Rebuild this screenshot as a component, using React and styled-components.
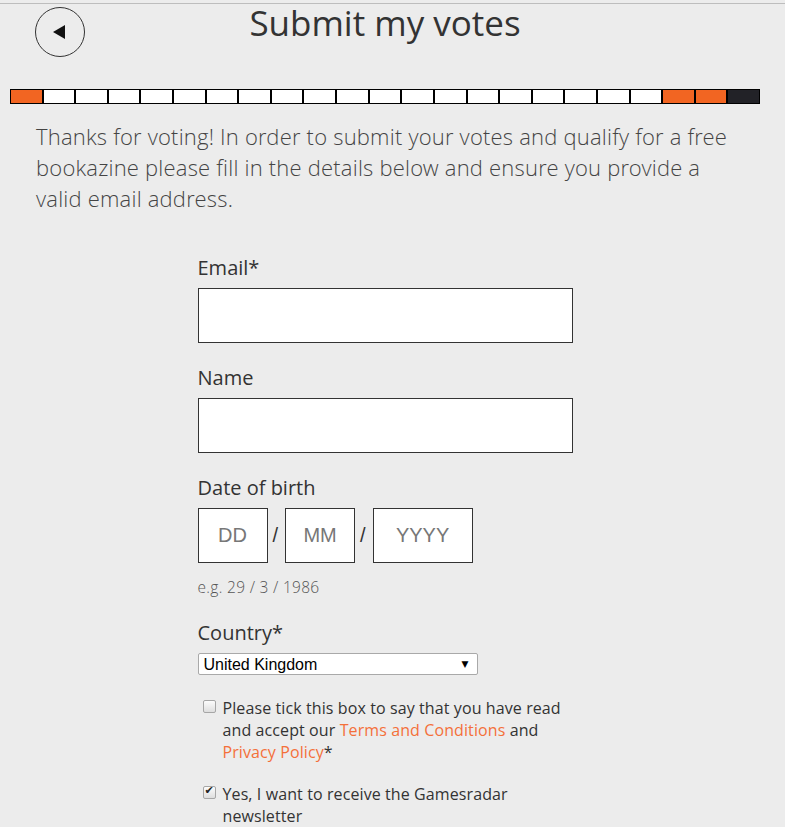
import styled, { createGlobalStyle } from "styled-components";

const GlobalStyle = createGlobalStyle`
  html, body {
    margin: 0;
    background: #ececec;
  }
  body {
    font-family: "Open Sans", "DejaVu Sans", sans-serif;
    color: #333;
  }
`;

// 23 steps: first done, then 19 open, two done, current one dark
const steps = [
  "done",
  ...Array(19).fill("open"),
  "done",
  "done",
  "current",
];

const stepColors = {
  done: "#f26522",
  open: "#ffffff",
  current: "#222227",
};

const App = () => {
  return (
    <Page>
      <GlobalStyle />
      <Wrapper>
        <Header>
          <BackButton type="button" aria-label="Back">
            <svg width="12" height="14" viewBox="0 0 12 14">
              <polygon points="0,7 12,0 12,14" fill="#111" />
            </svg>
          </BackButton>
          <Title>Submit my votes</Title>
          <span />
        </Header>

        <Progress>
          {steps.map((s, i) => (
            <Step key={i} $state={s} />
          ))}
        </Progress>

        <Intro>
          Thanks for voting! In order to submit your votes and qualify for a
          free bookazine please fill in the details below and ensure you
          provide a valid email address.
        </Intro>

        <Form>
          <Field>
            <Label>Email*</Label>
            <TextInput type="email" />
          </Field>
          <Field>
            <Label>Name</Label>
            <TextInput type="text" />
          </Field>
          <Field>
            <Label>Date of birth</Label>
            <DateRow>
              <DateBox $w={70} placeholder="DD" />
              <Slash>/</Slash>
              <DateBox $w={70} placeholder="MM" />
              <Slash>/</Slash>
              <DateBox $w={100} placeholder="YYYY" />
            </DateRow>
            <Hint>e.g. 29 / 3 / 1986</Hint>
          </Field>
          <Field>
            <Label>Country*</Label>
            <SelectWrap>
              <Select defaultValue="uk">
                <option value="uk">United Kingdom</option>
              </Select>
              <Arrow>▼</Arrow>
            </SelectWrap>
          </Field>

          <Checks>
            <CheckRow>
              <CheckBox type="checkbox" />
              <CheckText>
                Please tick this box to say that you have read and accept our{" "}
                <Link href="#">Terms and Conditions</Link> and{" "}
                <Link href="#">Privacy Policy</Link>*
              </CheckText>
            </CheckRow>
            <CheckRow>
              <CheckBox type="checkbox" defaultChecked />
              <CheckText>Yes, I want to receive the Gamesradar newsletter</CheckText>
            </CheckRow>
          </Checks>
        </Form>
      </Wrapper>
    </Page>
  );
};

const lightFont = `"Open Sans Light", "Open Sans", "DejaVu Sans", sans-serif`;

const Page = styled.div`
  margin-top: 3px;
  border-top: 1px solid #bdbdbd;
  min-height: 823px;
`;
const Wrapper = styled.div`
  width: 750px;
  margin-left: 10px;
`;
const Header = styled.div`
  display: grid;
  grid-template-columns: 1fr auto 1fr;
  align-items: start;
`;
const BackButton = styled.button`
  width: 50px;
  height: 50px;
  box-sizing: border-box;
  margin: 3px 0 0 25px;
  padding: 0;
  border: 1px solid #333;
  border-radius: 50%;
  background: transparent;
  display: flex;
  align-items: center;
  justify-content: center;
  cursor: pointer;
  svg {
    margin-left: -2px;
  }
`;
const Title = styled.h1`
  margin: 0;
  padding-top: 1px;
  font-size: 35px;
  font-weight: 400;
  line-height: 36px;
  color: #333;
  white-space: nowrap;
`;
const Progress = styled.div`
  display: flex;
  height: 15px;
  margin-top: 32px;
  box-sizing: border-box;
  border: 1px solid #000;
`;
const Step = styled.div`
  flex: 1;
  background: ${(p) => stepColors[p.$state]};
  & + & {
    border-left: 2px solid #000;
  }
`;
const Intro = styled.p`
  margin: 17px 0 0;
  padding: 0 26px;
  font-family: ${lightFont};
  font-size: 22px;
  font-weight: 300;
  line-height: 31px;
  letter-spacing: 0.2px;
  color: #444;
`;
const Form = styled.form`
  width: 375px;
  margin: 39px auto 0;
`;
const Field = styled.div`
  margin-bottom: 20px;
`;
const Label = styled.label`
  display: block;
  font-size: 20px;
  line-height: 28px;
  margin-bottom: 7px;
  padding-top: 1px;
  color: #333;
`;
const TextInput = styled.input`
  display: block;
  width: 375px;
  height: 55px;
  box-sizing: border-box;
  margin: -1px 0 0;
  border: 1px solid #333;
  background: #fff;
  outline: none;
`;
const DateRow = styled.div`
  display: flex;
  align-items: center;
  gap: 5px;
  margin-top: -1px;
`;
const DateBox = styled.input`
  width: ${(p) => p.$w}px;
  height: 55px;
  box-sizing: border-box;
  margin: 0;
  border: 1px solid #333;
  background: #fff;
  text-align: center;
  font-family: "Liberation Sans", Arial, sans-serif;
  font-size: 20px;
  outline: none;
  &::placeholder {
    color: #777;
  }
`;
const Slash = styled.span`
  font-family: "Liberation Sans", Arial, sans-serif;
  font-size: 20px;
  color: #333;
  margin-right: 2px;
`;
const Hint = styled.div`
  margin-top: 13px;
  font-family: ${lightFont};
  font-size: 15.5px;
  font-weight: 300;
  line-height: 22px;
  letter-spacing: 0.3px;
  color: #555;
`;
const SelectWrap = styled.div`
  position: relative;
  width: 280px;
  margin-top: -1px;
`;
const Select = styled.select`
  display: block;
  width: 280px;
  height: 22px;
  box-sizing: border-box;
  margin: 0;
  padding: 0 0 0 5px;
  border: 1px solid #a9a9a9;
  border-radius: 2px;
  background: #fff;
  appearance: none;
  font-family: "Liberation Sans", Arial, sans-serif;
  font-size: 16px;
  color: #000;
`;
const Arrow = styled.span`
  position: absolute;
  right: 9px;
  top: 5px;
  font-family: "DejaVu Sans", sans-serif;
  font-size: 9px;
  line-height: 12px;
  color: #000;
  pointer-events: none;
`;
const Checks = styled.div`
  margin-top: 22px;
`;
const CheckRow = styled.label`
  display: flex;
  align-items: flex-start;
  margin-bottom: 20px;
`;
const CheckBox = styled.input`
  appearance: none;
  width: 13px;
  height: 13px;
  flex: none;
  box-sizing: border-box;
  margin: 3px 7px 0 5px;
  border: 1px solid #a6a6a6;
  border-radius: 2px;
  background: linear-gradient(#fcfcfc, #dedede);
  position: relative;
  &:checked::after {
    content: "✔";
    position: absolute;
    left: 1px;
    top: -3px;
    font-family: "DejaVu Sans", sans-serif;
    font-size: 11px;
    color: #222;
  }
`;
const CheckText = styled.span`
  width: 350px;
  font-size: 16px;
  line-height: 22px;
  letter-spacing: 0.1px;
  color: #333;
`;
const Link = styled.a`
  color: #f4703a;
  text-decoration: none;
`;

export default App;
